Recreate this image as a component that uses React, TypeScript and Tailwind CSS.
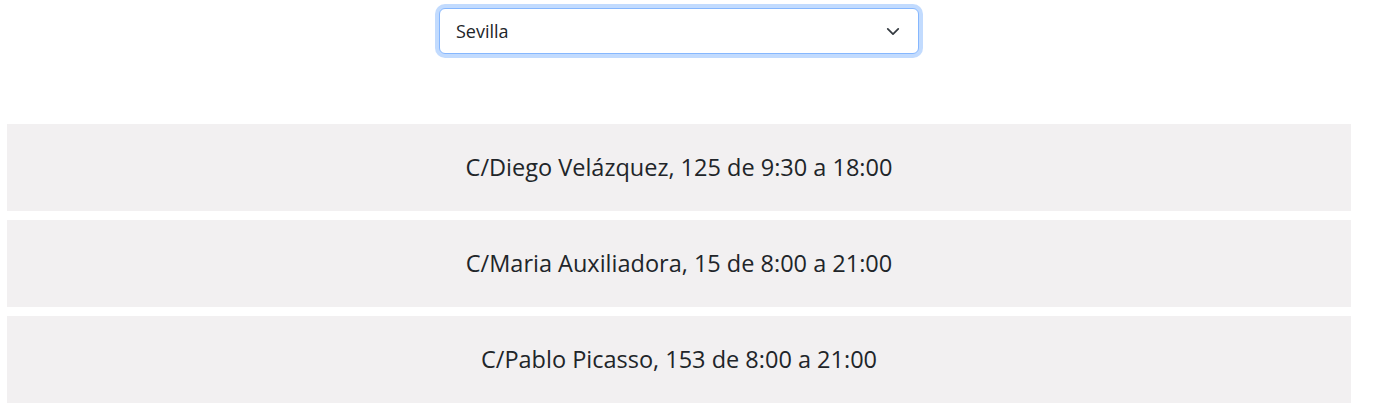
import React, { useState } from 'react';

const tiendas: Record<string, string[]> = {
    Sevilla: [
        'C/Diego Velázquez, 125 de 9:30 a 18:00',
        'C/Maria Auxiliadora, 15 de 8:00 a 21:00',
        'C/Pablo Picasso, 153 de 8:00 a 21:00',
    ],
    Madrid: ['C/Gran Vía, 20 de 10:00 a 22:00'],
};

const App: React.FC = () => {
    const [ciudad, setCiudad] = useState('Sevilla');

    return (
        <div className="w-[1378px] pt-[8px] text-[#212529]" style={{ fontFamily: '"Open Sans", "Noto Sans", sans-serif' }}>
            <div className="flex justify-center">
                <div className="relative ml-[-20px] w-[480px]">
                    <select
                        value={ciudad}
                        onChange={(e) => setCiudad(e.target.value)}
                        className="box-border h-[46px] w-full appearance-none rounded-[6px] border border-[#86b7fe] bg-white pl-[16px] pr-10 text-[18px] text-[#212529] shadow-[0_0_0_4px_rgba(13,110,253,0.25)] outline-none"
                    >
                        {Object.keys(tiendas).map((c) => (
                            <option key={c} value={c}>{c}</option>
                        ))}
                    </select>
                    <svg
                        className="pointer-events-none absolute right-[19px] top-[19px]"
                        width="14"
                        height="9"
                        viewBox="0 0 16 10"
                        fill="none"
                        stroke="#343a40"
                        strokeWidth="2"
                        strokeLinecap="round"
                        strokeLinejoin="round"
                    >
                        <path d="M2 2l6 6 6-6" />
                    </svg>
                </div>
            </div>
            <div className="ml-[7px] mt-[70px] flex w-[1344px] flex-col gap-[9px]">
                {tiendas[ciudad].map((t) => (
                    <div key={t} className="flex h-[87px] items-center justify-center bg-[#f2f0f1] text-[23.5px]">
                        {t}
                    </div>
                ))}
            </div>
        </div>
    );
};

export default App;
